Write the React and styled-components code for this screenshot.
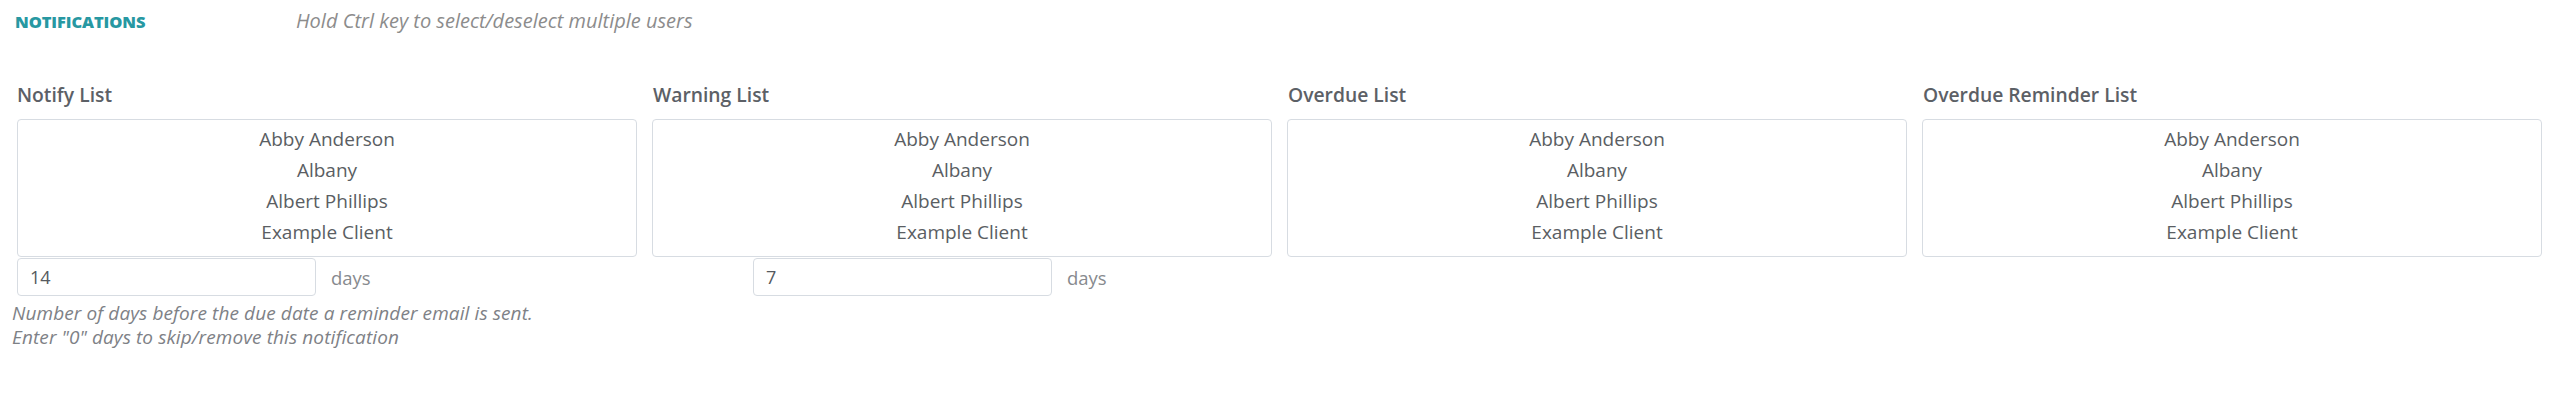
import styled, { createGlobalStyle } from "styled-components"

const GlobalStyle = createGlobalStyle`
  html, body {
    margin: 0;
    padding: 0;
    background: #ffffff;
  }

  body {
    font-family: "Open Sans", "Noto Sans", sans-serif;
    color: #5c6066;
  }
`

const Section = styled.section`
  width: 2560px;
  box-sizing: border-box;
  padding: 0 18px 0 17px;
`

const Header = styled.div`
  display: grid;
  grid-template-columns: 281px 1fr;
  align-items: baseline;
  padding-top: 9px;
  margin-left: -2px;
`

const Title = styled.h4`
  margin: 0;
  font-size: 16.5px;
  line-height: 24px;
  font-weight: 800;
  letter-spacing: -0.1px;
  color: #2798a2;
  text-transform: uppercase;
`

const Hint = styled.p`
  margin: 0;
  font-size: 20px;
  line-height: 24px;
  font-style: italic;
  color: #8c8c8c;
`

const Lists = styled.div`
  display: grid;
  grid-template-columns: repeat(4, 1fr);
  column-gap: 15px;
  margin-top: 48px;
`

const Field = styled.div`
  display: flex;
  flex-direction: column;
`

const Label = styled.label`
  font-size: 19.3px;
  line-height: 26px;
  font-weight: 600;
  color: #5c6066;
  margin-bottom: 11px;
  padding-left: ${({ $inset }) => $inset || 0}px;
`

const ListBox = styled.div`
  border: 1px solid #d7dce2;
  border-radius: 4px;
  padding: 4px 0 8px;
  text-align: center;
`

const Option = styled.div`
  font-size: 19px;
  line-height: 31px;
  color: #5a5e63;
`

const Reminders = styled.div`
  display: flex;
  margin-top: 1px;
`

const Reminder = styled.div`
  width: ${({ $width }) => ($width ? `${$width}px` : "auto")};
  flex-shrink: 0;
`

const InputRow = styled.div`
  display: flex;
  align-items: center;
  gap: 15px;
`

const DaysInput = styled.input`
  width: 299px;
  height: 38px;
  box-sizing: border-box;
  border: 1px solid #d7dce2;
  border-radius: 4px;
  padding: 0 12px;
  font-family: inherit;
  font-size: 18px;
  color: #555a60;
  background: #fff;
  outline: none;
`

const Unit = styled.span`
  font-size: 18.5px;
  color: #878a8e;
`

const Help = styled.p`
  margin: 5px 0 0 -5px;
  font-size: 19px;
  line-height: 24px;
  letter-spacing: 0.1px;
  font-style: italic;
  color: #7e8186;
`

const lists = ["Notify List", "Warning List", "Overdue List", "Overdue Reminder List"]
const users = ["Abby Anderson", "Albany", "Albert Phillips", "Example Client"]

const App = () => {
  return (
    <>
      <GlobalStyle />
      <Section>
        <Header>
          <Title>Notifications</Title>
          <Hint>Hold Ctrl key to select/deselect multiple users</Hint>
        </Header>
        <Lists>
          {lists.map((name, i) => (
            <Field key={name}>
              <Label $inset={i > 0 ? 1 : 0}>{name}</Label>
              <ListBox>
                {users.map((u) => (
                  <Option key={u}>{u}</Option>
                ))}
              </ListBox>
            </Field>
          ))}
        </Lists>
        <Reminders>
          <Reminder $width={736}>
            <InputRow>
              <DaysInput defaultValue="14" />
              <Unit>days</Unit>
            </InputRow>
            <Help>
              Number of days before the due date a reminder email is sent.
              <br />
              Enter "0" days to skip/remove this notification
            </Help>
          </Reminder>
          <Reminder>
            <InputRow>
              <DaysInput defaultValue="7" />
              <Unit>days</Unit>
            </InputRow>
          </Reminder>
        </Reminders>
      </Section>
    </>
  )
}

export default App
